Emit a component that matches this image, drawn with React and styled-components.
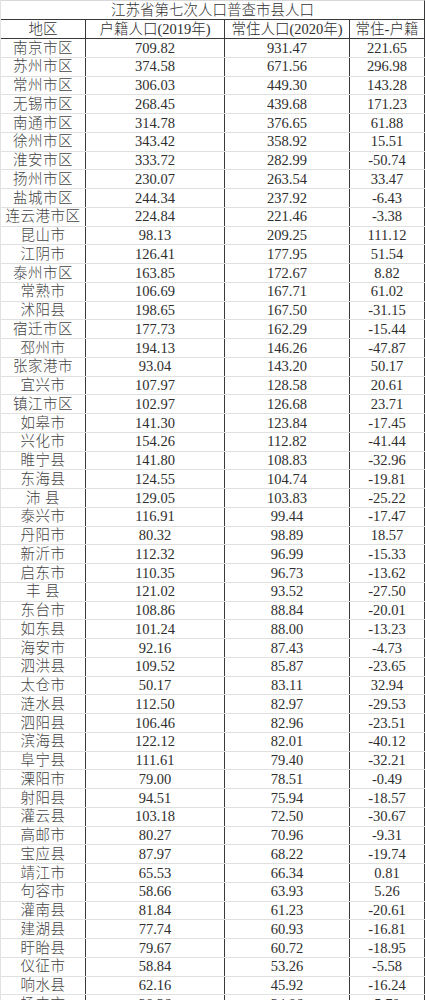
import React from 'react'
import styled, { createGlobalStyle } from 'styled-components'

const GlobalStyle = createGlobalStyle`
  body {
    margin: 0;
    background: #fff;
  }
`

const rows = [
  ['南京市区', '709.82', '931.47', '221.65'],
  ['苏州市区', '374.58', '671.56', '296.98'],
  ['常州市区', '306.03', '449.30', '143.28'],
  ['无锡市区', '268.45', '439.68', '171.23'],
  ['南通市区', '314.78', '376.65', '61.88'],
  ['徐州市区', '343.42', '358.92', '15.51'],
  ['淮安市区', '333.72', '282.99', '-50.74'],
  ['扬州市区', '230.07', '263.54', '33.47'],
  ['盐城市区', '244.34', '237.92', '-6.43'],
  ['连云港市区', '224.84', '221.46', '-3.38'],
  ['昆山市', '98.13', '209.25', '111.12'],
  ['江阴市', '126.41', '177.95', '51.54'],
  ['泰州市区', '163.85', '172.67', '8.82'],
  ['常熟市', '106.69', '167.71', '61.02'],
  ['沭阳县', '198.65', '167.50', '-31.15'],
  ['宿迁市区', '177.73', '162.29', '-15.44'],
  ['邳州市', '194.13', '146.26', '-47.87'],
  ['张家港市', '93.04', '143.20', '50.17'],
  ['宜兴市', '107.97', '128.58', '20.61'],
  ['镇江市区', '102.97', '126.68', '23.71'],
  ['如皋市', '141.30', '123.84', '-17.45'],
  ['兴化市', '154.26', '112.82', '-41.44'],
  ['睢宁县', '141.80', '108.83', '-32.96'],
  ['东海县', '124.55', '104.74', '-19.81'],
  ['沛 县', '129.05', '103.83', '-25.22'],
  ['泰兴市', '116.91', '99.44', '-17.47'],
  ['丹阳市', '80.32', '98.89', '18.57'],
  ['新沂市', '112.32', '96.99', '-15.33'],
  ['启东市', '110.35', '96.73', '-13.62'],
  ['丰 县', '121.02', '93.52', '-27.50'],
  ['东台市', '108.86', '88.84', '-20.01'],
  ['如东县', '101.24', '88.00', '-13.23'],
  ['海安市', '92.16', '87.43', '-4.73'],
  ['泗洪县', '109.52', '85.87', '-23.65'],
  ['太仓市', '50.17', '83.11', '32.94'],
  ['涟水县', '112.50', '82.97', '-29.53'],
  ['泗阳县', '106.46', '82.96', '-23.51'],
  ['滨海县', '122.12', '82.01', '-40.12'],
  ['阜宁县', '111.61', '79.40', '-32.21'],
  ['溧阳市', '79.00', '78.51', '-0.49'],
  ['射阳县', '94.51', '75.94', '-18.57'],
  ['灌云县', '103.18', '72.50', '-30.67'],
  ['高邮市', '80.27', '70.96', '-9.31'],
  ['宝应县', '87.97', '68.22', '-19.74'],
  ['靖江市', '65.53', '66.34', '0.81'],
  ['句容市', '58.66', '63.93', '5.26'],
  ['灌南县', '81.84', '61.23', '-20.61'],
  ['建湖县', '77.74', '60.93', '-16.81'],
  ['盱眙县', '79.67', '60.72', '-18.95'],
  ['仪征市', '58.84', '53.26', '-5.58'],
  ['响水县', '62.16', '45.92', '-16.24'],
  ['扬中市', '28.36', '34.06', '5.70'],
]

const App = () => {
  return (
    <>
      <GlobalStyle />
      <Sheet>
        <Title>江苏省第七次人口普查市县人口</Title>
        <Row $head>
          <Cell>地区</Cell>
          <Cell>户籍人口(2019年)</Cell>
          <Cell>常住人口(2020年)</Cell>
          <Cell>常住-户籍</Cell>
        </Row>
        {rows.map(r => (
          <Row key={r[0]}>
            <Cell $name>{r[0]}</Cell>
            <Cell>{r[1]}</Cell>
            <Cell>{r[2]}</Cell>
            <Cell>{r[3]}</Cell>
          </Row>
        ))}
      </Sheet>
    </>
  )
}

// light weight only hits the CJK fallback, the serif digits stay regular
const Sheet = styled.div`
width: 425px;
box-sizing: border-box;
border-left: 1px solid #e2e2e2;
font-family: "Liberation Serif", "Noto Sans CJK SC", serif;
font-size: 14.5px;
font-weight: 300;
color: #2e2e2e;
`

const Title = styled.div`
height: 20px;
box-sizing: border-box;
border-top: 1px solid #d8d8d8;
border-right: 1px solid #3a3a3a;
border-bottom: 1px solid #3a3a3a;
display: flex;
align-items: center;
justify-content: center;
line-height: 1;
color: #333;
`

const Row = styled.div`
display: grid;
grid-template-columns: 85px 139px 125px 75px;
height: ${p => (p.$head ? '19px' : '18.76px')};
box-sizing: border-box;
border-bottom: 1px solid ${p => (p.$head ? '#3a3a3a' : '#e0e0e0')};
`

const Cell = styled.div`
display: flex;
align-items: center;
justify-content: center;
border-right: 1px solid #3a3a3a;
white-space: nowrap;
line-height: 1;
overflow: hidden;
letter-spacing: ${p => (p.$name ? '0.5px' : '0')};
color: ${p => (p.$name ? '#444' : 'inherit')};
`

export default App
